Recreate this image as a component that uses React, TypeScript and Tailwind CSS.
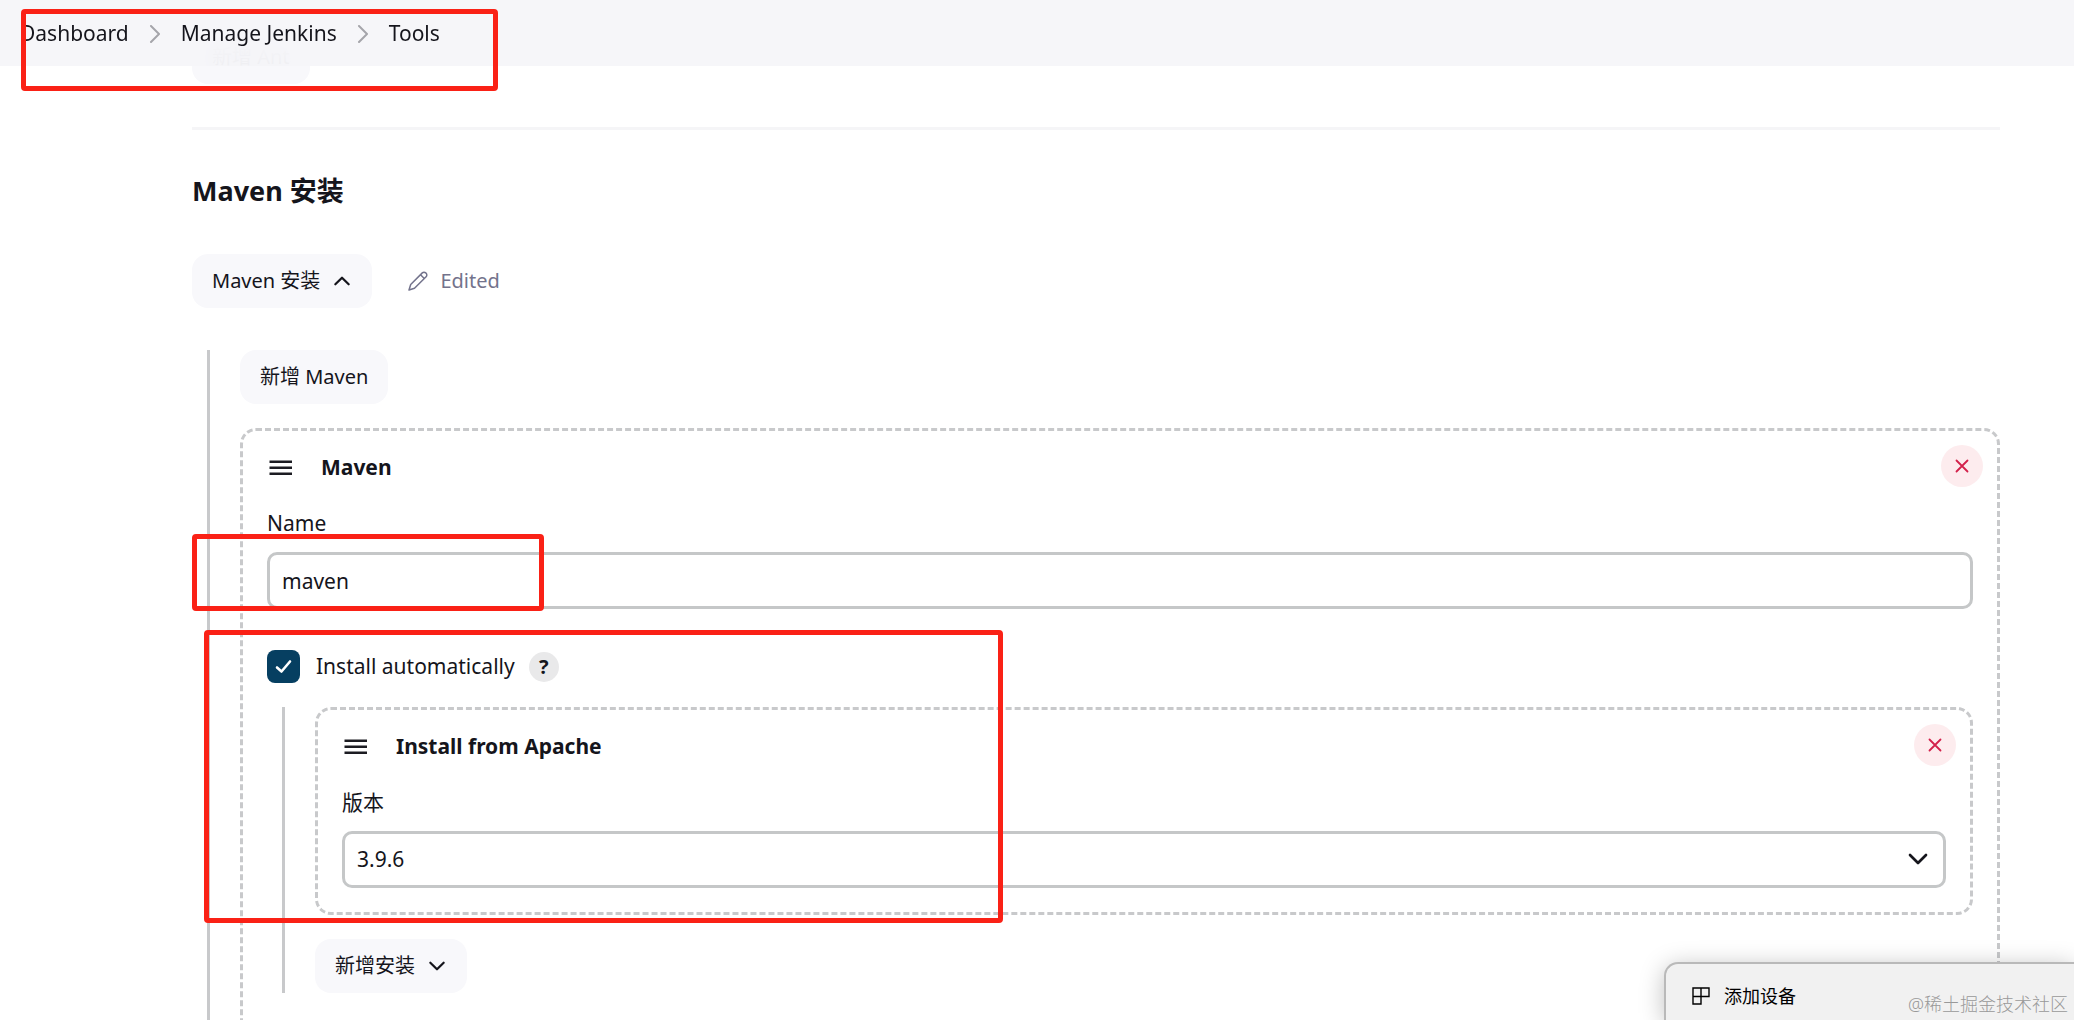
import type { ReactNode } from "react";

const Chevron = ({ className, d }: { className: string; d: string }) => (
  <svg
    viewBox="0 0 18 18"
    className={className}
    fill="none"
    stroke="currentColor"
    strokeLinecap="round"
    strokeLinejoin="round"
    aria-hidden="true"
  >
    <path d={d} />
  </svg>
);

const UP = "M3 12l6-6 6 6";
const DOWN = "M3 6l6 6 6-6";
const RIGHT = "M5 1l8 8-8 8";

const SoftButton = ({ children }: { children: ReactNode }) => (
  <button
    type="button"
    className="inline-flex h-[54px] items-center gap-3 rounded-2xl bg-[#f8f8fb] px-5 text-[20px]"
  >
    {children}
  </button>
);

const DragHandle = () => (
  <svg viewBox="0 0 24 16" className="h-4 w-6" stroke="#1c1c22" strokeWidth="2.4" aria-hidden="true">
    <path d="M0.5 1.700h22.500M0.5 7.700h22.500M0.5 13.700h22.500" />
  </svg>
);

// Repeatable block with a dashed border, a drag handle and a delete button
const Chunk = ({ title, children }: { title: string; children: ReactNode }) => (
  <section className="relative rounded-2xl border-[3px] border-dashed border-[#c8c9cb] px-6 pb-6">
    <div className="flex h-[73px] items-center gap-7 pl-0.5">
      <DragHandle />
      <h3 className="text-[21px] font-bold">{title}</h3>
    </div>
    <button
      type="button"
      aria-label="Delete"
      className="absolute top-[14px] right-[14px] flex size-[42px] items-center justify-center rounded-full bg-[#fdecee] text-[#d3214b]"
    >
      <svg viewBox="0 0 14 14" className="size-[14px]" stroke="currentColor" strokeWidth="1.8" strokeLinecap="round" aria-hidden="true">
        <path d="M1.5 1.5l11 11M12.5 1.5l-11 11" />
      </svg>
    </button>
    {children}
  </section>
);

export default function App() {
  return (
    <div className="relative h-screen overflow-hidden bg-white font-['Noto_Sans','Noto_Sans_CJK_SC',sans-serif] text-[#15151c]">
      <header className="relative z-10 h-[66px] bg-[#f6f6f9]/95 backdrop-blur-lg">
        <nav className="flex h-full items-center gap-[17px] pt-0.5 pl-5 text-[21px]">
          <a href="#">Dashboard</a>
          <Chevron className="size-[18px] stroke-2 text-[#a5a5aa]" d={RIGHT} />
          <a href="#">Manage Jenkins</a>
          <Chevron className="size-[18px] stroke-2 text-[#a5a5aa]" d={RIGHT} />
          <a href="#">Tools</a>
        </nav>
      </header>

      <main className="-mt-9 pr-[74px] pl-48">
        <SoftButton>新增 Ant</SoftButton>
        <hr className="mt-[43px] border-t-[3px] border-[#f5f5f7]" />

        <h2 className="mt-[42px] text-[27px] leading-[38px] font-bold">Maven 安装</h2>

        <div className="mt-11 flex items-center gap-9">
          <SoftButton>
            Maven 安装
            <Chevron className="size-5 stroke-2" d={UP} />
          </SoftButton>
          <span className="flex items-center gap-3 text-[20px] text-[#73738c]">
            <svg viewBox="0 0 20 20" className="size-5" fill="none" stroke="currentColor" strokeWidth="1.5" strokeLinejoin="round" aria-hidden="true">
              <path d="M1 19l1.7-5.500L14.300 1.900a2.400 2.400 0 0 1 3.400 0l.4.4a2.400 2.400 0 0 1 0 3.400L6.500 17.300z" />
              <path d="M12.500 3.700l3.800 3.800" />
            </svg>
            Edited
          </span>
        </div>

        <div className="mt-[42px] ml-[15px] border-l-[3px] border-[#c8c9cb] pb-40 pl-[30px]">
          <SoftButton>新增 Maven</SoftButton>

          <div className="mt-6">
            <Chunk title="Maven">
              <label htmlFor="name" className="block pt-[3px] text-[21px] leading-8">
                Name
              </label>
              <input
                id="name"
                defaultValue="maven"
                className="mt-[13px] block h-[57px] w-full rounded-[10px] border-[3px] border-[#c5c7c8] px-3 text-[21px]"
              />

              <div className="mt-[41px] flex items-center">
                <span className="relative size-[33px]">
                  <input
                    id="auto"
                    type="checkbox"
                    defaultChecked
                    className="block size-[33px] appearance-none rounded-lg bg-[#063f61]"
                  />
                  <svg viewBox="0 0 33 33" className="pointer-events-none absolute inset-0" fill="none" stroke="#fff" strokeWidth="2.6" strokeLinecap="round" strokeLinejoin="round" aria-hidden="true">
                    <path d="M10 17.500l4.500 4L23 11.500" />
                  </svg>
                </span>
                <label htmlFor="auto" className="ml-4 text-[21px] leading-[33px]">
                  Install automatically
                </label>
                <button
                  type="button"
                  aria-label="Help"
                  className="ml-[14px] size-[30px] rounded-full bg-[#e9e9ea] text-[20px] leading-[30px] font-bold"
                >
                  ?
                </button>
              </div>

              <div className="mt-6 ml-[15px] border-l-[3px] border-[#c8c9cb] pl-[30px]">
                <Chunk title="Install from Apache">
                  <label htmlFor="version" className="block pt-[3px] text-[21px] leading-8">
                    版本
                  </label>
                  <div className="relative mt-[13px]">
                    <select
                      id="version"
                      className="block h-[57px] w-full appearance-none rounded-[10px] border-[3px] border-[#c5c7c8] px-3 text-[21px]"
                    >
                      <option>3.9.6</option>
                    </select>
                    <Chevron
                      className="pointer-events-none absolute top-4 right-4 size-6 stroke-2"
                      d={DOWN}
                    />
                  </div>
                </Chunk>
                <div className="mt-6 flex">
                  <SoftButton>
                    新增安装
                    <Chevron className="size-5 stroke-2" d={DOWN} />
                  </SoftButton>
                </div>
              </div>
              <div className="h-24" />
            </Chunk>
          </div>
        </div>
      </main>

      {/* device toast in the corner */}
      <aside className="absolute right-0 bottom-0 z-10 flex h-[58px] w-[410px] items-center gap-[14px] rounded-tl-[14px] border-t-2 border-l-2 border-[#b9b9b9] bg-[#f1f1f1] pt-2 pl-[26px] text-[18px] text-black shadow-[0_4px_24px_rgba(0,0,0,0.25)]">
        <svg viewBox="0 0 18 18" className="size-[18px]" fill="none" stroke="currentColor" strokeWidth="1.400" aria-hidden="true">
          <path d="M1 1h16v8.500H1zM9 1v16H1V1" />
        </svg>
        添加设备
      </aside>
      <span className="absolute right-1.5 bottom-1 z-20 text-[18px] leading-6 font-light text-[#999]">
        @稀土掘金技术社区
      </span>

      {/* highlight frames */}
      <div className="pointer-events-none absolute top-[9px] left-[21px] z-20 h-[82px] w-[477px] rounded border-[5px] border-[#fa2116]" />
      <div className="pointer-events-none absolute top-[534px] left-48 z-20 h-[77px] w-[352px] rounded border-[5px] border-[#fa2116]" />
      <div className="pointer-events-none absolute top-[630px] left-[204px] z-20 h-[293px] w-[799px] rounded border-[5px] border-[#fa2116]" />
    </div>
  );
}
